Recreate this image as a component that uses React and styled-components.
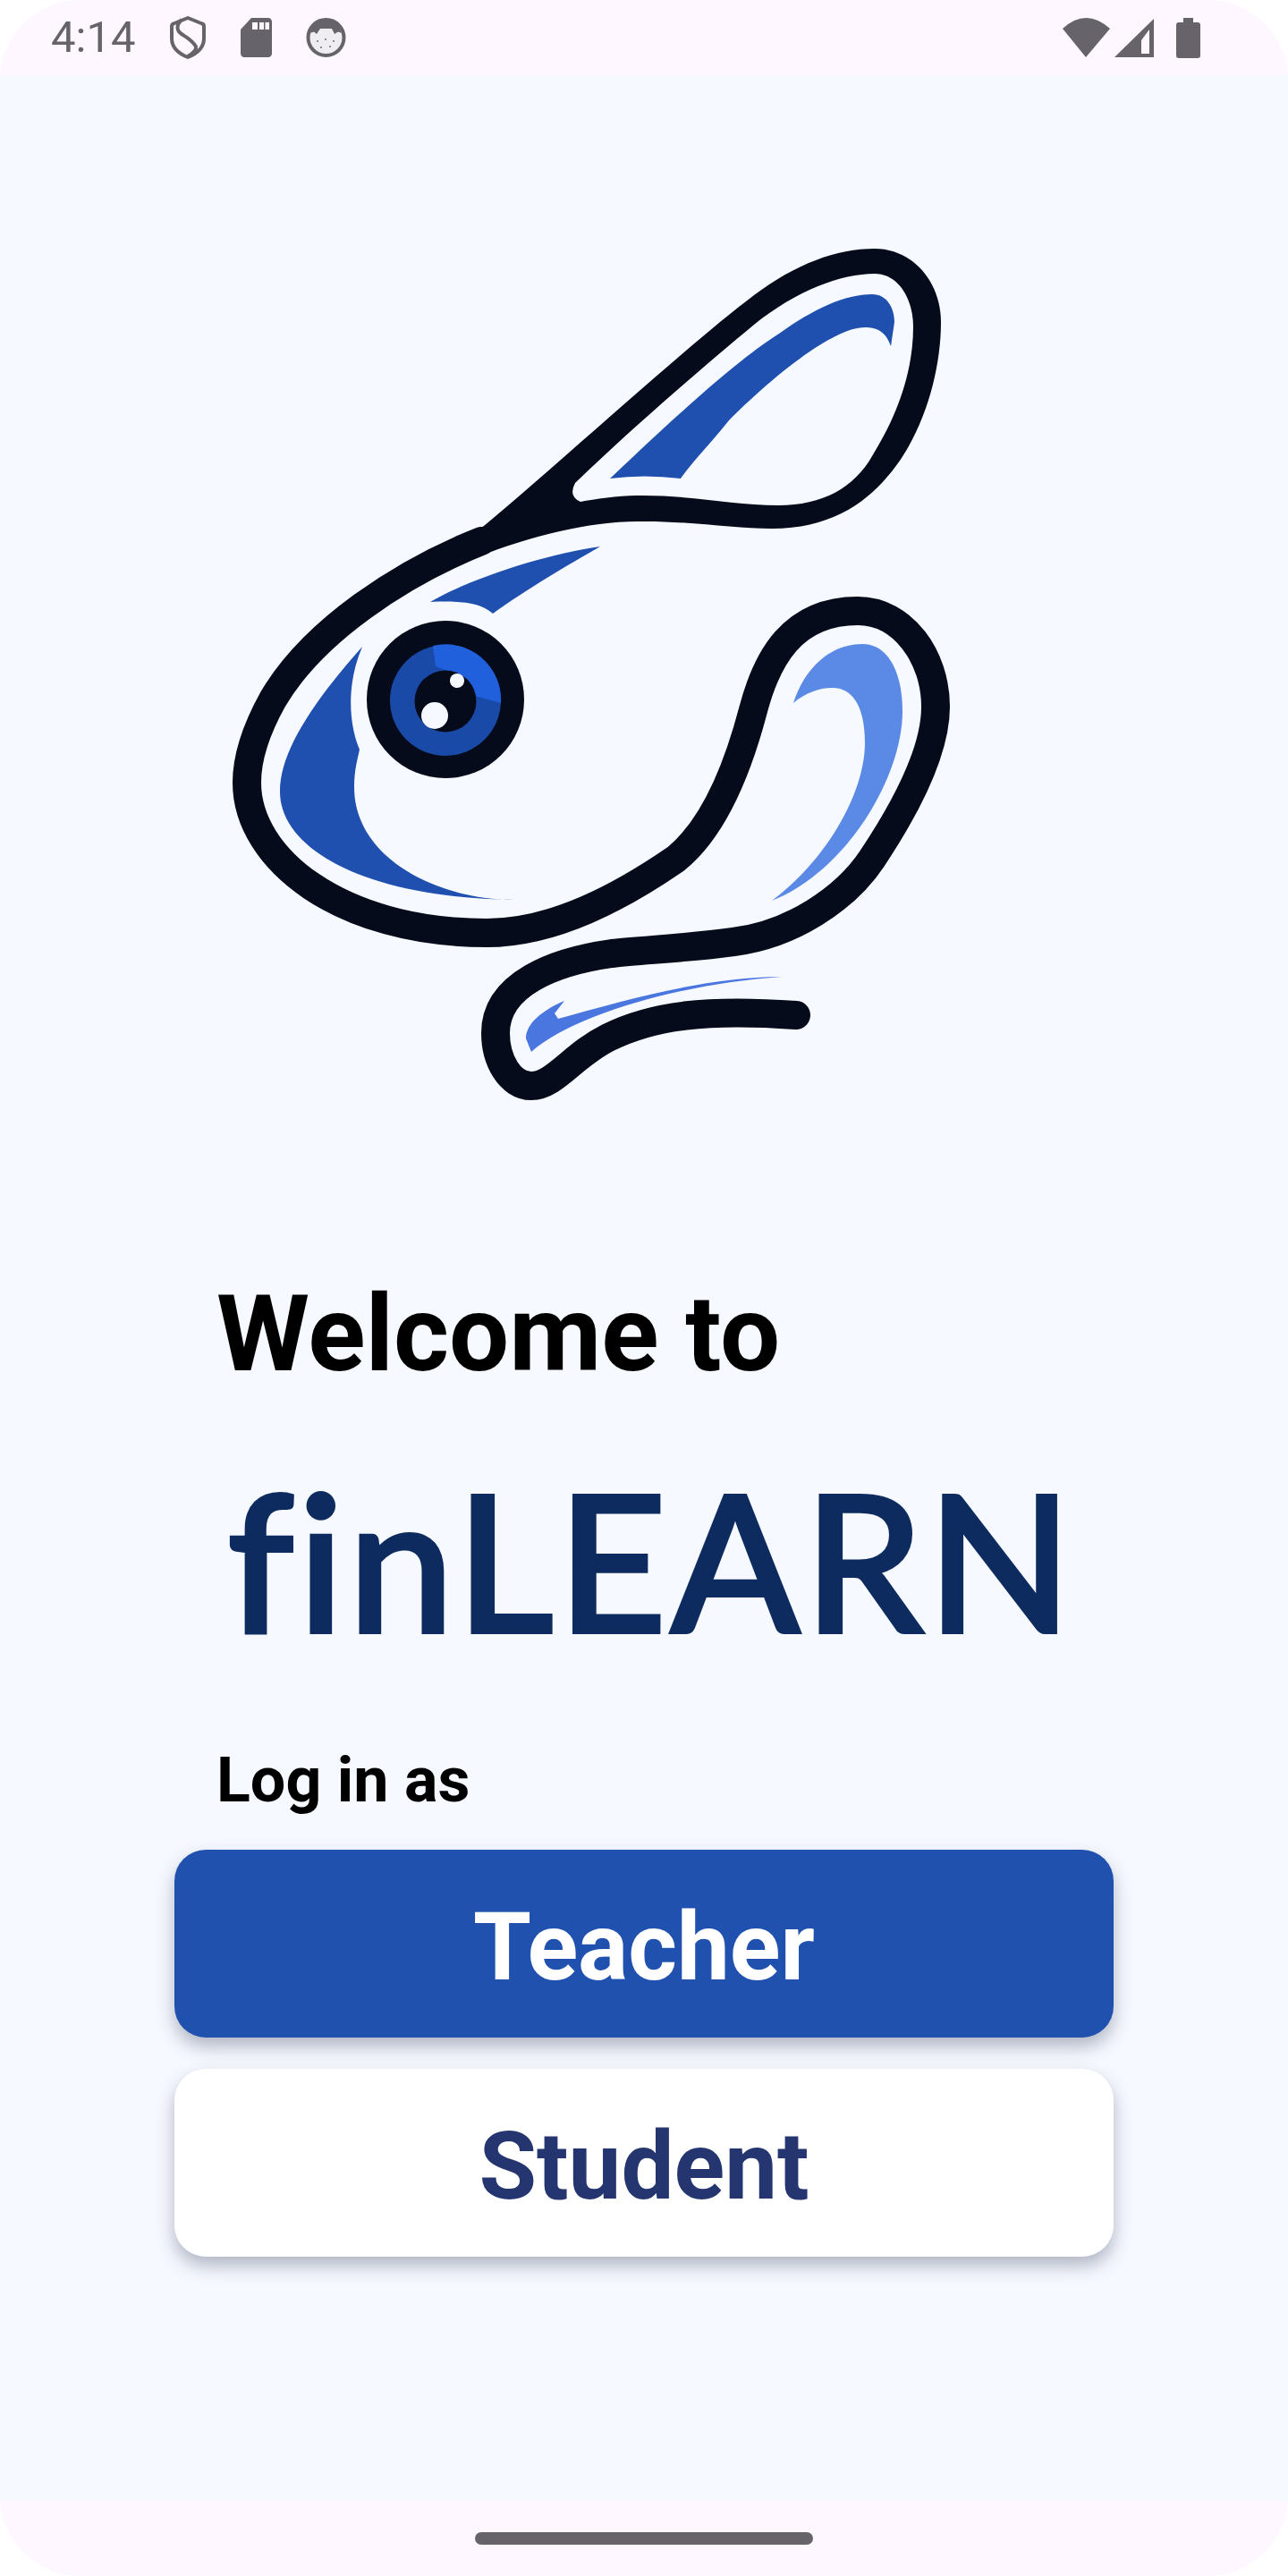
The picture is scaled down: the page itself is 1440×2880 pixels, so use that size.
import React from "react";
import styled, { createGlobalStyle } from "styled-components";

const GlobalStyle = createGlobalStyle`
  html, body { margin: 0; padding: 0; background: #ffffff; }
  body { font-family: Roboto, "Liberation Sans", sans-serif; }
`;

const Frame = styled.div`
  width: 1440px;
  height: 2880px;
  border-radius: 90px;
  overflow: hidden;
  background: #f6f9ff;
  display: flex;
  flex-direction: column;
`;

const StatusBar = styled.header`
  height: 84px;
  flex: none;
  background: #fef7ff;
  display: flex;
  align-items: center;
  justify-content: space-between;
  padding: 0 98px 0 57px;
`;

const StatusLeft = styled.div`
  display: flex;
  align-items: center;
  gap: 38px;
`;

const StatusRight = styled.div`
  display: flex;
  align-items: center;
  gap: 25px;
`;

const SignalCluster = styled.div`
  display: flex;
  align-items: center;
  gap: 5px;
`;

const Clock = styled.span`
  font: 400 49px/84px Roboto, sans-serif;
  color: #66636a;
  width: 94px;
`;

const StatusIcon = styled.svg`
  display: block;
  flex: none;
`;

const Main = styled.main`
  flex: 1;
  display: flex;
  flex-direction: column;
`;

const Logo = styled.svg`
  display: block;
  width: 860px;
  height: 980px;
  margin: 176px 0 0 240px;
`;

const Welcome = styled.h1`
  margin: 182px 0 0 242px;
  font: 700 119px/140px Roboto, sans-serif;
  color: #000000;
`;

const Brand = styled.div`
  margin: 66px 0 0 254px;
  font: 500 212px/230px Lato, sans-serif;
  font-variant-ligatures: none;
  letter-spacing: 4.3px;
  -webkit-text-stroke: 4px #0d2b5e;
  color: #0d2b5e;
  white-space: nowrap;
`;

const LogInAs = styled.h2`
  margin: 87px 0 0 242px;
  font: 700 70px/90px Roboto, sans-serif;
  color: #000000;
`;

const Actions = styled.div`
  margin: 33px 0 0 195px;
  width: 1050px;
  display: flex;
  flex-direction: column;
  gap: 35px;
`;

const RoleButton = styled.button`
  height: 210px;
  box-sizing: border-box;
  border: 0;
  border-radius: 35px;
  padding: 10px 0 0;
  background: ${(p) => (p.$primary ? "#2051af" : "#ffffff")};
  color: ${(p) => (p.$primary ? "#ffffff" : "#24356f")};
  font: 700 105px/200px Roboto, sans-serif;
  text-align: center;
  box-shadow: 0 10px 20px rgba(40, 50, 80, 0.34);
`;

const NavBar = styled.footer`
  height: 84px;
  flex: none;
  background: #fef7ff;
  display: flex;
  justify-content: center;
  padding-top: 35px;
  box-sizing: border-box;
`;

const Handle = styled.div`
  width: 378px;
  height: 14px;
  border-radius: 7px;
  background: #66636a;
`;

const INK = "#050b1a";
const BLUE = "#1f50b0";

const earOutline = "M541 588C640 505 770 385 843 330C890 295 935 278 978 278C1020 278 1052 315 1052 360C1052 420 1030 490 992 533C965 565 925 591 863 591C820 591 770 582 712 583C660 583 590 600 536 622L510 625L510 606Z";
const earHole = "M643 540C700 485 780 415 843 363C890 325 940 306 978 306C1005 306 1021 335 1021 365C1021 420 1000 470 975 510C955 545 920 565 870 565C820 565 770 553 712 554C690 554 665 558 649 561Q635 555 643 540Z";
const earBlue = "M682 535C740 480 820 405 871 373C910 345 945 329 975 329C992 329 1000 345 1000 360L996 387C990 370 980 366 967 366C930 366 860 425 815 470C795 495 775 515 761 535Q720 530 682 535Z";
const browBlue = "M481 673C530 645 610 620 671 611C620 640 580 665 551 686C535 672 510 672 481 673Z";
const bodyLine = "M538 605C450 640 350 705 305 782C285 818 276 850 276 875C276 960 380 1043 544 1043C620 1043 695 1002 756 960C795 928 822 870 842 794C857 737 885 683 959 683C1010 683 1046 735 1046 790C1046 845 1005 915 975 960C945 1005 885 1045 820 1053C770 1060 720 1062 684 1066C620 1075 554 1100 554 1155C554 1185 570 1214 594 1214C620 1214 640 1180 680 1160C730 1135 790 1128 890 1135";
const cheekBlue = "M405 723C350 785 313 840 313 885C313 950 410 1004 575 1006C490 1006 396 960 396 880C396 860 400 848 402 838C392 815 385 770 405 723Z";
const finBlue = "M887 786C900 745 930 720 964 720C995 720 1009 755 1009 795C1009 870 945 975 863 1007C920 965 967 890 967 830C967 785 950 769 931 769C915 769 900 775 887 786Z";
const tailBlue = "M874 1092C790 1092 700 1118 624 1139L620 1133L631 1119C605 1130 588 1145 588 1161L594 1176C640 1135 760 1100 874 1092Z";

const BrandMark = () => (
  <Logo viewBox="240 260 860 980" aria-label="finLEARN logo">
    <path d={`${earOutline}${earHole}`} fill={INK} fillRule="evenodd" />
    <path d={earBlue} fill={BLUE} />
    <path d={browBlue} fill={BLUE} />
    <path d={bodyLine} fill="none" stroke={INK} strokeWidth="32" strokeLinecap="round" strokeLinejoin="round" />
    <path d={cheekBlue} fill={BLUE} />
    <path d={finBlue} fill="#5b8ae6" />
    <path d={tailBlue} fill="#4a76e0" />
    <circle cx="498" cy="782" r="88" fill={INK} />
    <circle cx="498" cy="783" r="62" fill="#1a4aa8" />
    <path d="M484 722A62 62 0 0 1 560 786L520 775L500 750L487 745Z" fill="#2060dd" />
    <circle cx="498" cy="784" r="34.5" fill={INK} />
    <circle cx="486" cy="800" r="15" fill="#f6f9ff" />
    <circle cx="511" cy="761" r="8" fill="#f6f9ff" />
  </Logo>
);

const ShieldIcon = () => (
  <StatusIcon width="42" height="50" viewBox="0 0 42 50">
    <path d="M21 3L37 9.5C38.5 10 39 11 39 12.5V26C39 36 31 43 21 47C11 43 3 36 3 26V12.5C3 11 3.5 10 5 9.5Z" fill="none" stroke="#66636a" strokeWidth="4" strokeLinejoin="round" />
    <path d="M14 5C8 11 8 17 14 21C20 25 26 28 30 35C31 39 26 43 21 46" fill="none" stroke="#66636a" strokeWidth="4" />
  </StatusIcon>
);

const CardIcon = () => (
  <StatusIcon width="35" height="44" viewBox="0 0 35 44">
    <path d="M12 0H31C33 0 35 2 35 4V40C35 42 33 44 31 44H4C2 44 0 42 0 40V13Z" fill="#66636a" />
    <path d="M13 5H19V13H13ZM21 5H26V13H21ZM27.5 5H32V13H27.5Z" fill="#fef7ff" />
  </StatusIcon>
);

const FaceIcon = () => (
  <StatusIcon width="45" height="44" viewBox="0 0 45 44">
    <circle cx="22.5" cy="22" r="20" fill="#f0edf2" stroke="#66636a" strokeWidth="4" />
    <path d="M5 17C8 7 15 2 22.5 2C30 2 37 7 40 17L36 15.5L32 18L29 12H16L12 18L9 15.5Z" fill="#66636a" />
    <path d="M12 25h2v2h-2zM21 23h2v2h-2zM30 25h2v2h-2zM16 32h2v2h-2zM26 31h2v2h-2z" fill="#66636a" opacity="0.7" />
  </StatusIcon>
);

const WifiIcon = () => (
  <StatusIcon width="53" height="44" viewBox="0 0 53 44">
    <path d="M26 44L0 12Q26 -12 53 12Z" fill="#66636a" />
  </StatusIcon>
);

const SignalIcon = () => (
  <StatusIcon width="44" height="43" viewBox="0 0 44 43">
    <path d="M0 43L44 0V43Z" fill="#66636a" />
    <path d="M30 24L39 12V39H30Z" fill="#fef7ff" />
  </StatusIcon>
);

const BatteryIcon = () => (
  <StatusIcon width="27" height="45" viewBox="0 0 27 45">
    <path d="M8 0H19V5H24C26 5 27 6 27 8V42C27 44 26 45 24 45H3C1 45 0 44 0 42V8C0 6 1 5 3 5H8Z" fill="#66636a" />
  </StatusIcon>
);

export default function App() {
  return (
    <>
      <GlobalStyle />
      <Frame>
        <StatusBar>
          <StatusLeft>
            <Clock>4:14</Clock>
            <ShieldIcon />
            <CardIcon />
            <FaceIcon />
          </StatusLeft>
          <StatusRight>
            <SignalCluster>
              <WifiIcon />
              <SignalIcon />
            </SignalCluster>
            <BatteryIcon />
          </StatusRight>
        </StatusBar>
        <Main>
          <BrandMark />
          <Welcome>Welcome to</Welcome>
          <Brand>finLEARN</Brand>
          <LogInAs>Log in as</LogInAs>
          <Actions>
            <RoleButton $primary>Teacher</RoleButton>
            <RoleButton>Student</RoleButton>
          </Actions>
        </Main>
        <NavBar>
          <Handle />
        </NavBar>
      </Frame>
    </>
  );
}
